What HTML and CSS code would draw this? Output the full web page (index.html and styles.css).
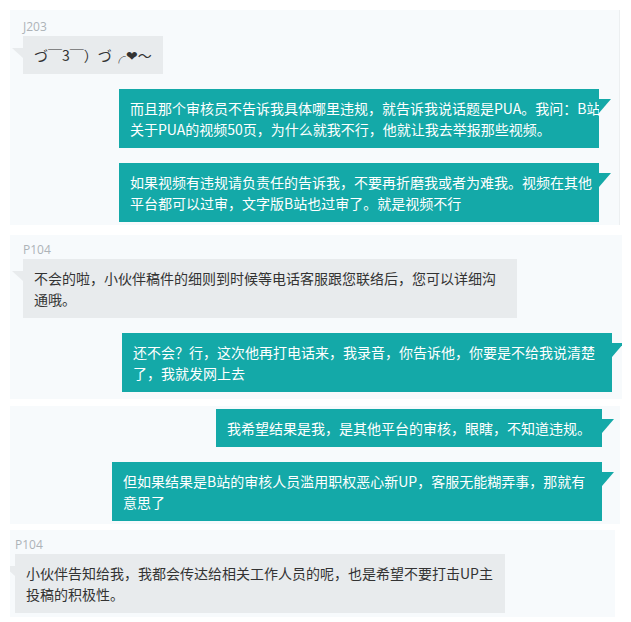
FILE: index.html
```html
<!DOCTYPE html>
<html lang="zh-CN">
<head>
  <meta charset="UTF-8" />
  <meta name="viewport" content="width=device-width, initial-scale=1.0"/>
  <title>客服对话截图</title>
  <link rel="stylesheet" href="styles.css">
</head>
<body>
  <div class="shot shot-1">
    <div class="msg msg-in">
      <div class="name">J203</div>
      <div class="bubble">づ￣3￣）づ╭❤～</div>
    </div>
    <div class="msg msg-out">
      <div class="bubble long">而且那个审核员不告诉我具体哪里违规，就告诉我说话题是PUA。我问：B站<br>关于PUA的视频50页，为什么就我不行，他就让我去举报那些视频。</div>
    </div>
    <div class="msg msg-out">
      <div class="bubble long">如果视频有违规请负责任的告诉我，不要再折磨我或者为难我。视频在其他<br>平台都可以过审，文字版B站也过审了。就是视频不行</div>
    </div>
  </div>

  <div class="shot shot-2">
    <div class="msg msg-in">
      <div class="name">P104</div>
      <div class="bubble long">不会的啦，小伙伴稿件的细则到时候等电话客服跟您联络后，您可以详细沟<br>通哦。</div>
    </div>
    <div class="msg msg-out">
      <div class="bubble long">还不会？行，这次他再打电话来，我录音，你告诉他，你要是不给我说清楚<br>了，我就发网上去</div>
    </div>
  </div>

  <div class="shot shot-3">
    <div class="msg msg-out">
      <div class="bubble">我希望结果是我，是其他平台的审核，眼瞎，不知道违规。</div>
    </div>
    <div class="msg msg-out">
      <div class="bubble long">但如果结果是B站的审核人员滥用职权恶心新UP，客服无能糊弄事，那就有<br>意思了</div>
    </div>
  </div>

  <div class="shot shot-4">
    <div class="msg msg-in">
      <div class="name">P104</div>
      <div class="bubble long">小伙伴告知给我，我都会传达给相关工作人员的呢，也是希望不要打击UP主<br>投稿的积极性。</div>
    </div>
  </div>
</body>
</html>
```

FILE: styles.css
```css
body {
  margin: 0;
  background-color: #fff;
  font-family: "Noto Sans CJK SC", "Noto Sans", sans-serif;
  font-size: 14px;
  color: #333;
}

/* each screenshot piece */
.shot {
  background-color: #f7fafc;
  margin-left: 10px;
  overflow: hidden;
  display: flex;
  flex-direction: column;
}

.shot-1 {
  width: 610px;
  margin-top: 10px;
  padding: 9px 20px 3px 13px;
  box-sizing: border-box;
  border-right: 1px solid #eceff1;
}

.shot-1 .bubble.long {
  width: 480px;
}

.shot-2 {
  width: 612px;
  margin-top: 10px;
  padding: 7px 10px 7px 13px;
  box-sizing: border-box;
}

.shot-2 .msg-in .bubble.long {
  width: 494px;
}

.shot-3 {
  width: 610px;
  margin-top: 7px;
  padding: 3px 18px 3px 13px;
  box-sizing: border-box;
}

.shot-4 {
  width: 605px;
  margin-top: 6px;
  padding: 7px 10px 4px 5px;
  box-sizing: border-box;
}

.msg {
  display: flex;
  flex-direction: column;
}

.msg + .msg {
  margin-top: 15px;
}

.msg-in {
  align-items: flex-start;
}

.msg-out {
  align-items: flex-end;
}

.name {
  font-family: "Open Sans", "Noto Sans", sans-serif;
  font-size: 12px;
  line-height: 16px;
  color: #adb3b8;
  margin-bottom: 1px;
}

.bubble {
  position: relative;
  padding: 9px 11px 8px;
  line-height: 21px;
  white-space: nowrap;
  box-sizing: border-box;
}

.bubble.long {
  width: 490px;
}

.msg-in .bubble {
  background-color: #e8ebed;
  color: #333;
}

.msg-out .bubble {
  background-color: #14a9a8;
  color: #fff;
}

/* little tails */
.msg-in .bubble::before {
  content: "";
  position: absolute;
  left: -11px;
  top: 12px;
  width: 11px;
  height: 10px;
  background-color: #e8ebed;
  clip-path: polygon(0 0, 100% 0, 100% 100%);
}

.msg-out .bubble::after {
  content: "";
  position: absolute;
  right: -12px;
  top: 10px;
  width: 12px;
  height: 14px;
  background-color: #14a9a8;
  clip-path: polygon(0 0, 100% 0, 0 100%);
}
```
